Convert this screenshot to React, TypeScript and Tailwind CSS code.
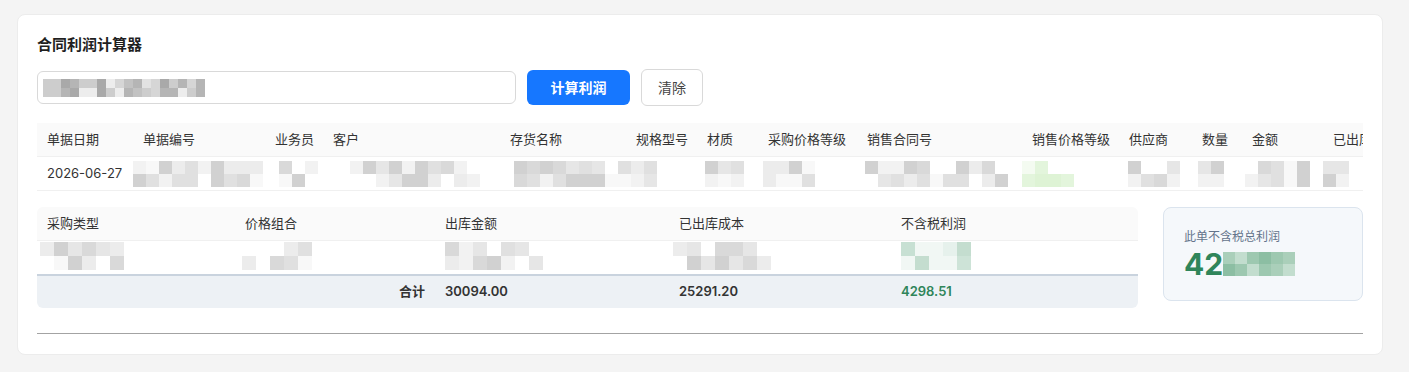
import React from "react";

const GREYS = ["#ffffff", "#f8f8f8", "#f2f2f2", "#ececec", "#e6e6e6", "#e0e0e0", "#d9d9d9", "#d1d1d1"];
const DARK_GREYS = ["#a9a9a9", "#b5b5b5", "#c2c2c2", "#cdcdcd", "#d6d6d6", "#e2e2e2", "#ededed"];
const LIGHT_GREENS = ["#c7e0d3", "#cde3d7", "#e6f1ec", "#f1f7f4", "#c4ddcf"];
const MID_GREENS = ["#8cbea3", "#9dc8b0", "#b4d6c3", "#aacfba", "#c2ddce"];
const LIME = ["#e3f5dc", "#f4fbf1", "#ffffff", "#def3d5"];

const rng = (seed: number) => {
    let s = seed;
    return () => {
        s = (s * 9301 + 49297) % 233280;
        return s / 233280;
    };
};

const Mosaic = ({ width, rows = 2, cell = 13, palette = GREYS, seed = 1, offset = 0 }: { width: number; rows?: number; cell?: number; palette?: string[]; seed?: number; offset?: number }) => {
    const r = rng(seed);
    const cols = Math.max(1, Math.round(width / cell));
    return (
        <div className="flex flex-col shrink-0" style={{ marginLeft: offset }}>
            {Array.from({ length: rows }).map((_, i) => (
                <div key={i} className="flex">
                    {Array.from({ length: cols }).map((_, j) => (
                        <div key={j} style={{ width: cell, height: cell, background: palette[Math.floor(r() * palette.length)] }} />
                    ))}
                </div>
            ))}
        </div>
    );
};

const TOP_COLS = [
    { label: "单据日期", w: 96 },
    { label: "单据编号", w: 132 },
    { label: "业务员", w: 58 },
    { label: "客户", w: 177 },
    { label: "存货名称", w: 126 },
    { label: "规格型号", w: 71 },
    { label: "材质", w: 61 },
    { label: "采购价格等级", w: 99 },
    { label: "销售合同号", w: 165 },
    { label: "销售价格等级", w: 97 },
    { label: "供应商", w: 73 },
    { label: "数量", w: 50 },
    { label: "金额", w: 81 },
    { label: "已出库数量", w: 100 },
];

// [offset, width, palette] per blurred cell (column index 1..)
const TOP_BLUR: [number, number, string[]][] = [
    [0, 130, GREYS],
    [14, 42, GREYS],
    [27, 134, GREYS],
    [14, 117, GREYS],
    [5, 30, GREYS],
    [8, 42, GREYS],
    [5, 52, GREYS],
    [8, 143, GREYS],
    [0, 47, LIME],
    [9, 58, GREYS],
    [6, 27, GREYS],
    [3, 60, GREYS],
    [0, 40, GREYS],
];

const BOTTOM_COLS = [
    { label: "采购类型", w: 198, blur: [3, 82, GREYS] as [number, number, string[]] },
    { label: "价格组合", w: 200, blur: [7, 68, GREYS] as [number, number, string[]] },
    { label: "出库金额", w: 234, blur: [10, 103, GREYS] as [number, number, string[]] },
    { label: "已出库成本", w: 222, blur: [4, 93, GREYS] as [number, number, string[]] },
    { label: "不含税利润", w: 247, blur: [10, 69, LIGHT_GREENS] as [number, number, string[]] },
];

export default function App() {
    return (
        <div className="min-h-[372px] bg-[#f4f4f4] pt-[14px] px-[17px] font-['Inter','Noto_Sans_CJK_SC',sans-serif] text-[13px] text-[#333]">
            <div className="w-[1366px] bg-white rounded-lg border border-[#ececec] px-[19px] pt-[19px] pb-5">
                <h2 className="text-[15px] leading-[22px] font-semibold text-[#1f1f1f]">合同利润计算器</h2>

                <div className="mt-[13px] flex items-center gap-[11px]">
                    <div className="w-[479px] h-[33px] border border-[#d9d9d9] rounded-md flex items-center px-[5px]">
                        <Mosaic width={162} rows={2} cell={9} palette={DARK_GREYS} seed={7} />
                    </div>
                    <button className="h-[35px] w-[103px] rounded-md bg-[#1677ff] text-white text-[14px] font-semibold">计算利润</button>
                    <button className="h-[37px] w-[62px] rounded-md border border-[#d9d9d9] bg-white text-[14px] text-[#444]">清除</button>
                </div>

                <div className="mt-[17px] overflow-hidden w-[1326px]">
                    <div className="flex bg-[#fafafa] border-b border-[#f0f0f0] h-[34px] items-center w-max">
                        {TOP_COLS.map((c) => (
                            <div key={c.label} className="px-[10px] whitespace-nowrap shrink-0" style={{ width: c.w }}>
                                {c.label}
                            </div>
                        ))}
                    </div>
                    <div className="flex border-b border-[#f0f0f0] h-[34px] items-center w-max">
                        <div className="px-[10px] shrink-0" style={{ width: TOP_COLS[0].w }}>2026-06-27</div>
                        {TOP_BLUR.map(([off, w, pal], i) => (
                            <div key={i} className="shrink-0 flex items-center" style={{ width: TOP_COLS[i + 1].w }}>
                                <Mosaic width={w} offset={off} cell={13} palette={pal} seed={i * 13 + 3} />
                            </div>
                        ))}
                    </div>
                </div>

                <div className="mt-4 flex items-start gap-[25px]">
                    <div className="w-[1101px] rounded-md overflow-hidden">
                        <div className="flex bg-[#fafafa] border-b border-[#f0f0f0] h-[34px] items-center">
                            {BOTTOM_COLS.map((c) => (
                                <div key={c.label} className="px-[10px] shrink-0" style={{ width: c.w }}>
                                    {c.label}
                                </div>
                            ))}
                        </div>
                        <div className="flex h-[33px] items-start pt-px">
                            {BOTTOM_COLS.map((c, i) => (
                                <div key={c.label} className="shrink-0" style={{ width: c.w }}>
                                    <Mosaic width={c.blur[1]} offset={c.blur[0]} cell={14} palette={c.blur[2]} seed={i * 17 + 5} />
                                </div>
                            ))}
                        </div>
                        <div className="flex h-[34px] items-center bg-[#edf1f5] border-t-2 border-[#c9d3de] font-semibold">
                            <div className="w-[198px] shrink-0" />
                            <div className="w-[200px] shrink-0 px-[10px] text-right">合计</div>
                            <div className="w-[234px] shrink-0 px-[10px]">30094.00</div>
                            <div className="w-[222px] shrink-0 px-[10px]">25291.20</div>
                            <div className="w-[247px] shrink-0 px-[10px] text-[#2f855a]">4298.51</div>
                        </div>
                    </div>

                    <div className="w-[200px] h-[94px] rounded-lg border border-[#dbe4ee] bg-[#f5f8fb] px-5 pt-[21px]">
                        <div className="text-[12px] leading-[16px] text-[#64748b]">此单不含税总利润</div>
                        <div className="mt-[3px] flex items-center">
                            <span className="text-[30px] leading-[32px] font-bold text-[#2f855a]">42</span>
                            <Mosaic width={68} rows={2} cell={12} palette={MID_GREENS} seed={11} />
                        </div>
                    </div>
                </div>

                <div className="mt-[25px] border-t border-[#a3a3a3]" />
            </div>
        </div>
    );
}
